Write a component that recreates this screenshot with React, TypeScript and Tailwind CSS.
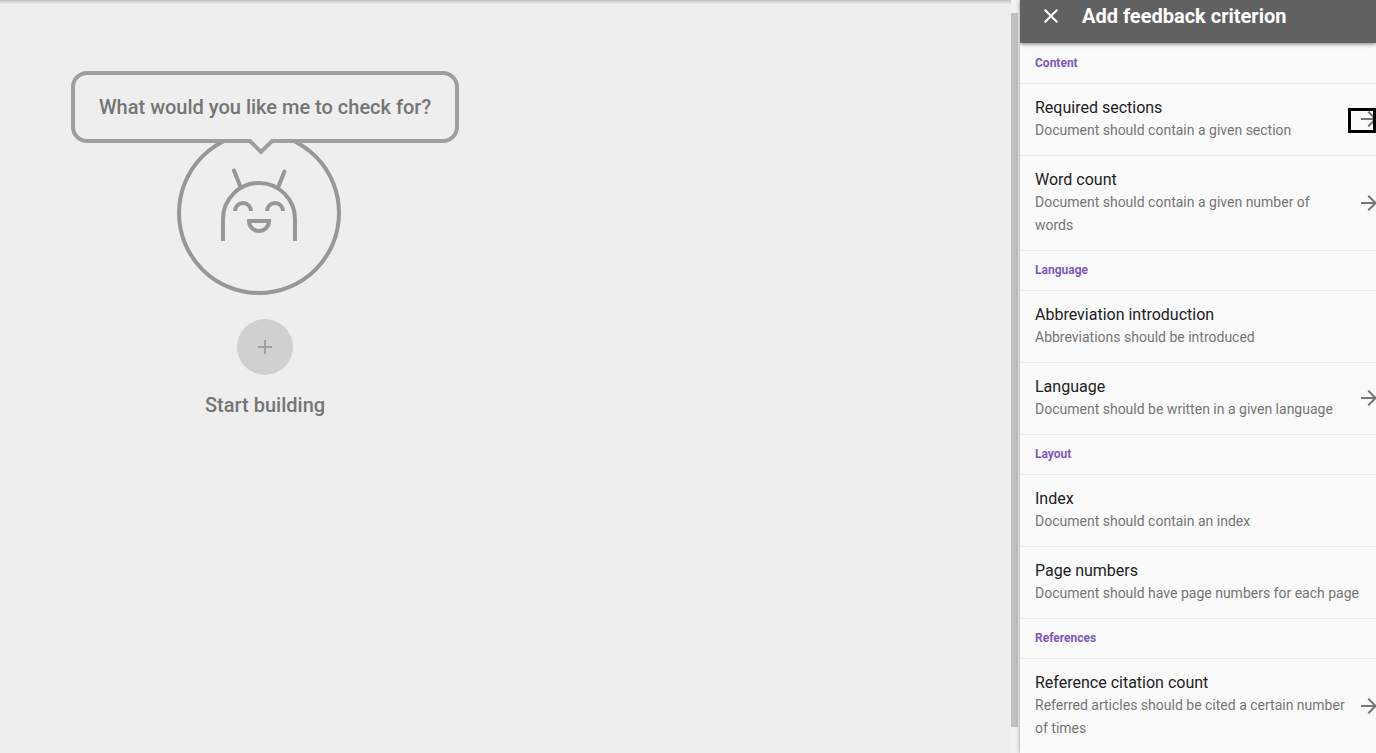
import { MdAdd, MdArrowForward, MdClose } from 'react-icons/md';

interface Criterion {
  title: string;
  description: string;
  hasOptions?: boolean;
  focused?: boolean;
}

interface CriterionGroup {
  name: string;
  items: Criterion[];
}

const groups: CriterionGroup[] = [
  {
    name: 'Content',
    items: [
      {
        title: 'Required sections',
        description: 'Document should contain a given section',
        hasOptions: true,
        focused: true
      },
      {
        title: 'Word count',
        description: 'Document should contain a given number of words',
        hasOptions: true
      }
    ]
  },
  {
    name: 'Language',
    items: [
      { title: 'Abbreviation introduction', description: 'Abbreviations should be introduced' },
      {
        title: 'Language',
        description: 'Document should be written in a given language',
        hasOptions: true
      }
    ]
  },
  {
    name: 'Layout',
    items: [
      { title: 'Index', description: 'Document should contain an index' },
      { title: 'Page numbers', description: 'Document should have page numbers for each page' }
    ]
  },
  {
    name: 'References',
    items: [
      {
        title: 'Reference citation count',
        description: 'Referred articles should be cited a certain number of times',
        hasOptions: true
      }
    ]
  }
];

const Robot = () => (
  <svg
    className="-mt-3 h-[164px] w-[176px]"
    viewBox="0 0 176 164"
    fill="none"
    stroke="#979797"
    strokeWidth="4"
    aria-hidden="true"
  >
    <circle cx="82" cy="82" r="80" />
    <path d="M46 110V88a36 36 0 0 1 72 0v22" />
    <path d="M57 39.500l6.500 16.500M107.500 40.500l-6.500 16" strokeLinecap="round" />
    <path d="M58 80a8 8 0 0 1 16 0M90 80a8 8 0 0 1 16 0" />
    <path d="M72 90h20a10 10 0 0 1-20 0z" />
  </svg>
);

const SpeechBubble = () => (
  <div className="relative z-10 rounded-2xl border-4 border-[#9e9e9e] bg-[#eeeeee] px-6 py-[18px]">
    <p className="text-xl leading-7 font-medium text-[#757575]">What would you like me to check for?</p>
    <svg
      className="absolute top-full left-[173px] h-[17px] w-[26px]"
      viewBox="0 0 26 17"
      fill="none"
      aria-hidden="true"
    >
      <path d="M2 0h22L13 13z" fill="#eeeeee" />
      <path d="M0 2h2l11 11L24 2h2" stroke="#9e9e9e" strokeWidth="4" />
    </svg>
  </div>
);

const CriterionRow = ({ title, description, hasOptions, focused }: Criterion) => (
  <li className="border-b border-[#ebebeb]">
    <button
      type="button"
      className="relative flex w-full items-center gap-2.5 pt-3 pr-2 pb-[13px] pl-[15px] text-left"
    >
      <span className="min-w-0 flex-1">
        <span className="block text-base leading-[23px] text-[#212121]">{title}</span>
        <span className="block text-sm leading-[23px] text-[#757575]">{description}</span>
      </span>
      {hasOptions && <MdArrowForward className="-mr-[13px] size-6 shrink-0 text-[#757575]" />}
      {focused && <span className="absolute top-6 right-0 h-[25px] w-7 border-3 border-black" />}
    </button>
  </li>
);

const CriteriaPanel = () => (
  <aside className="relative z-10 w-[356px] shrink-0 overflow-hidden bg-[#fafafa] shadow-[0_0_4px_rgba(0,0,0,0.4)]">
    <header className="relative flex items-center gap-[19px] bg-[#616161] pt-1 pb-[15px] pl-[19px] text-white shadow-[0_1px_4px_rgba(0,0,0,0.5)]">
      <button type="button" aria-label="Close">
        <MdClose className="size-6" />
      </button>
      <h1 className="text-xl leading-6 font-bold">Add feedback criterion</h1>
    </header>
    <div className="pt-px">
      {groups.map((group) => (
        <section key={group.name}>
          <h2 className="border-b border-[#ebebeb] pl-[15px] text-xs leading-[39px] font-bold text-[#7e57c2]">
            {group.name}
          </h2>
          <ul>
            {group.items.map((item) => (
              <CriterionRow key={item.title} {...item} />
            ))}
          </ul>
        </section>
      ))}
    </div>
  </aside>
);

export default function App() {
  return (
    <div className="flex h-screen overflow-hidden bg-[#eeeeee] font-[Roboto,sans-serif]">
      <main className="flex flex-1 items-start border-t border-[#c4c4c4] pt-[70px] pl-[71px] shadow-[inset_0_4px_2px_-2px_rgba(0,0,0,0.12)]">
        <div className="flex flex-col items-center">
          <SpeechBubble />
          <Robot />
          <button
            type="button"
            aria-label="Add criterion"
            className="mt-6 flex size-14 items-center justify-center rounded-full bg-[#d0d0d0] text-[#a0a0a0]"
          >
            <MdAdd className="size-6" />
          </button>
          <p className="mt-4 text-xl leading-7 font-medium text-[#757575]">Start building</p>
        </div>
      </main>
      <div className="flex w-[9px] shrink-0 flex-col bg-[#f1f1f1] pt-[13px] pb-[26px]">
        <div className="w-[7px] flex-1 bg-[#c1c1c1]" />
      </div>
      <CriteriaPanel />
    </div>
  );
}
